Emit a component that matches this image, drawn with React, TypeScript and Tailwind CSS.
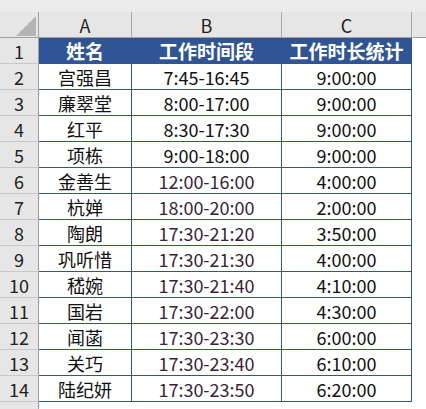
const rows: [string, string, string][] = [
  ["宫强昌", "7:45-16:45", "9:00:00"],
  ["廉翠堂", "8:00-17:00", "9:00:00"],
  ["红平", "8:30-17:30", "9:00:00"],
  ["项栋", "9:00-18:00", "9:00:00"],
  ["金善生", "12:00-16:00", "4:00:00"],
  ["杭婵", "18:00-20:00", "2:00:00"],
  ["陶朗", "17:30-21:20", "3:50:00"],
  ["巩听惜", "17:30-21:30", "4:00:00"],
  ["嵇婉", "17:30-21:40", "4:10:00"],
  ["国岩", "17:30-22:00", "4:30:00"],
  ["闻菡", "17:30-23:30", "6:00:00"],
  ["关巧", "17:30-23:40", "6:10:00"],
  ["陆纪妍", "17:30-23:50", "6:20:00"],
];

const font = { fontFamily: '"Noto Sans CJK SC", "Noto Sans", sans-serif' };

const RowHead = ({ n }: { n: number }) => (
  <div className="flex h-[26px] w-[39px] shrink-0 items-center justify-center border-r border-b border-r-[#9e9e9e] border-b-[#c8c8c8] bg-[#e6e6e6] text-[18px] text-[#222]">
    {n}
  </div>
);

const Cell = ({ w, children, tint }: { w: string; children: React.ReactNode; tint?: boolean }) => (
  <div
    className={`flex h-[26px] shrink-0 items-center justify-center border-r border-b border-[#2f5597] text-[18px] ${w} ${
      tint ? "text-[#3a1f3a]" : "text-[#111]"
    }`}
  >
    {children}
  </div>
);

export default function App() {
  return (
    <div className="h-[409px] w-[426px] overflow-hidden bg-white leading-none" style={font}>
      <div className="h-[12px] bg-[#ebebeb]" />
      {/* column headers */}
      <div className="flex h-[26px] border-b border-[#a0a0a0] bg-[#e6e6e6] text-[18px] text-[#222]">
        <div className="flex w-[39px] shrink-0 items-end justify-end border-r border-[#a0a0a0] pr-[2px] pb-[1px]">
          <svg width="20" height="20" viewBox="0 0 20 20">
            <polygon points="0,20 20,0 20,20" fill="#b4b4b4" />
          </svg>
        </div>
        <div className="flex w-[93px] shrink-0 items-center justify-center border-r border-[#a8a8a8]">A</div>
        <div className="flex w-[150px] shrink-0 items-center justify-center border-r border-[#a8a8a8]">B</div>
        <div className="flex w-[130px] shrink-0 items-center justify-center border-r border-[#a8a8a8]">C</div>
        <div className="flex-1" />
      </div>

      {/* title row */}
      <div className="flex">
        <RowHead n={1} />
        <div className="flex h-[26px] w-[93px] shrink-0 items-center justify-center border-r border-b border-[#2f5597] bg-[#2f5597] text-[19px] font-bold text-white">
          姓名
        </div>
        <div className="flex h-[26px] w-[150px] shrink-0 items-center justify-center border-r border-b border-[#2f5597] bg-[#2f5597] text-[19px] font-bold text-white">
          工作时间段
        </div>
        <div className="flex h-[26px] w-[130px] shrink-0 items-center justify-center border-r border-b border-[#2f5597] bg-[#2f5597] text-[19px] font-bold text-white">
          工作时长统计
        </div>
      </div>

      {rows.map((r, i) => (
        <div className="flex" key={i}>
          <RowHead n={i + 2} />
          <Cell w="w-[93px]">{r[0]}</Cell>
          <Cell w="w-[150px]" tint={i >= 4}>
            {r[1]}
          </Cell>
          <Cell w="w-[130px]">{r[2]}</Cell>
        </div>
      ))}

      {/* row 15, cut by the window edge as in the reference */}
      <div className="flex">
        <RowHead n={15} />
      </div>
    </div>
  );
}
